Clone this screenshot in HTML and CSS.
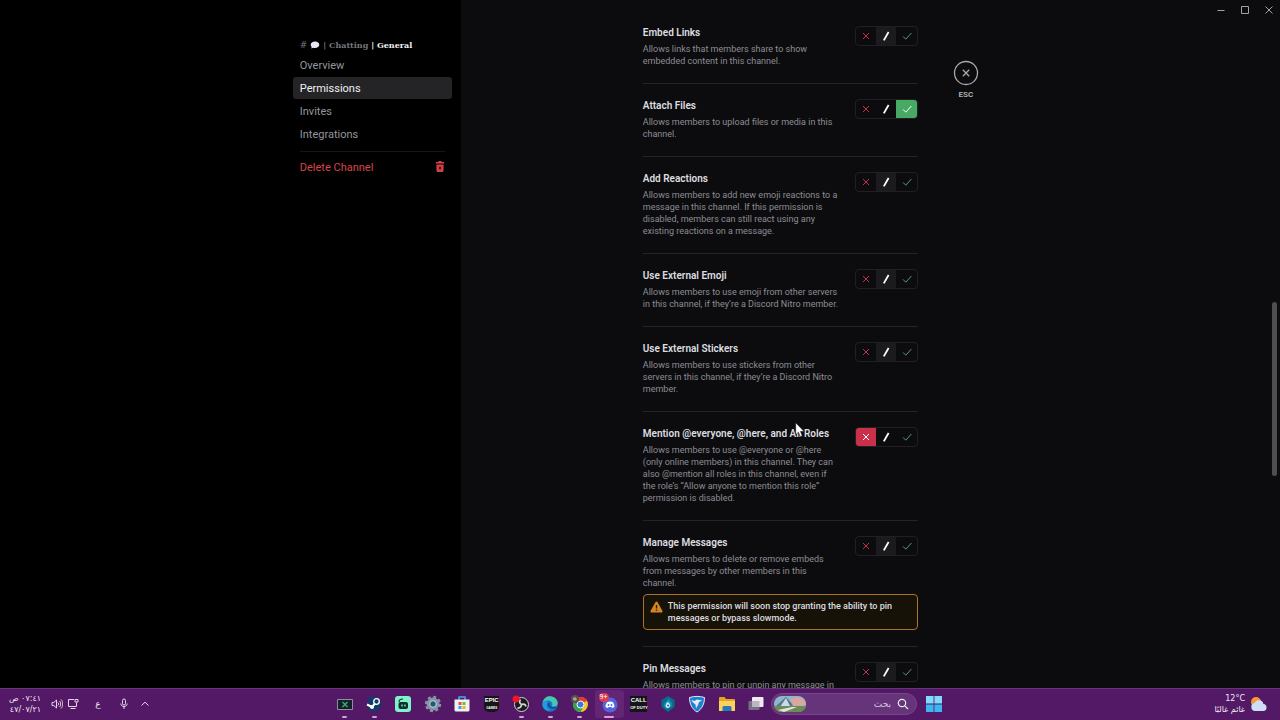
FILE: index.html
```html
<!DOCTYPE html>
<html lang="en">
<head>
    <meta charset="UTF-8">
    <meta name="viewport" content="width=device-width, initial-scale=1.0">
    <title>Channel Permissions</title>
    <link rel="stylesheet" href="styles.css">
</head>
<body>
    <svg class="sprite" aria-hidden="true">
        <symbol id="x" viewBox="0 0 12 12"><path d="M3 3l6 6M9 3l-6 6" /></symbol>
        <symbol id="slash" viewBox="0 0 12 12"><path d="M8.600 2L3.800 10.400" stroke-width="1.800" /></symbol>
        <symbol id="check" viewBox="0 0 12 12"><path d="M2 6.400l2.800 2.800L10.400 3" /></symbol>
    </svg>

    <div class="app">
        <aside class="sidebar">
            <nav class="menu">
                <h2 class="channel">
                    <span class="hash">#</span>
                    <svg class="bubble" viewBox="0 0 10 8"><path d="M5 .5c2.500 0 4.300 1.300 4.300 3.200S7.500 6.900 5 6.900c-.6 0-1.200-.1-1.700-.2L1.300 7.600l.4-1.700C1 5.300.7 4.600.7 3.700.7 1.800 2.500.5 5 .5z" fill="#e8e8f4" /></svg>
                    <span>| Chatting</span>
                    <span class="channel-name">| General</span>
                </h2>
                <a class="item" href="#">Overview</a>
                <a class="item active" href="#">Permissions</a>
                <a class="item" href="#">Invites</a>
                <a class="item" href="#">Integrations</a>
                <hr>
                <button class="item delete">
                    Delete Channel
                    <svg width="10" height="12" viewBox="0 0 10 12"><path d="M3.500 0h3v1H9v1.500H1V1h2.500zM1.500 3.500h7V9.500A1.500 1.500 0 0 1 7 11H3a1.500 1.500 0 0 1-1.500-1.500z" fill="#d9434b" /><path d="M3.800 5.500l2.400 3M6.200 5.500l-2.400 3" stroke="#400" fill="none" /></svg>
                </button>
            </nav>
        </aside>

        <main class="content">
            <div class="permissions">
                <section class="permission">
                    <div class="text">
                        <h3>Embed Links</h3>
                        <p>Allows links that members share to show<br>embedded content in this channel.</p>
                    </div>
                    <div class="toggle">
                        <label class="deny"><input type="radio" name="embed" aria-label="Deny"><svg><use href="#x" /></svg></label>
                        <label class="neutral"><input type="radio" name="embed" aria-label="Neutral" checked><svg><use href="#slash" /></svg></label>
                        <label class="allow"><input type="radio" name="embed" aria-label="Allow"><svg><use href="#check" /></svg></label>
                    </div>
                </section>

                <section class="permission">
                    <div class="text">
                        <h3>Attach Files</h3>
                        <p>Allows members to upload files or media in this<br>channel.</p>
                    </div>
                    <div class="toggle">
                        <label class="deny"><input type="radio" name="attach" aria-label="Deny"><svg><use href="#x" /></svg></label>
                        <label class="neutral"><input type="radio" name="attach" aria-label="Neutral"><svg><use href="#slash" /></svg></label>
                        <label class="allow"><input type="radio" name="attach" aria-label="Allow" checked><svg><use href="#check" /></svg></label>
                    </div>
                </section>

                <section class="permission">
                    <div class="text">
                        <h3>Add Reactions</h3>
                        <p>Allows members to add new emoji reactions to a<br>message in this channel. If this permission is<br>disabled, members can still react using any<br>existing reactions on a message.</p>
                    </div>
                    <div class="toggle">
                        <label class="deny"><input type="radio" name="reactions" aria-label="Deny"><svg><use href="#x" /></svg></label>
                        <label class="neutral"><input type="radio" name="reactions" aria-label="Neutral" checked><svg><use href="#slash" /></svg></label>
                        <label class="allow"><input type="radio" name="reactions" aria-label="Allow"><svg><use href="#check" /></svg></label>
                    </div>
                </section>

                <section class="permission">
                    <div class="text">
                        <h3>Use External Emoji</h3>
                        <p>Allows members to use emoji from other servers<br>in this channel, if they’re a Discord Nitro member.</p>
                    </div>
                    <div class="toggle">
                        <label class="deny"><input type="radio" name="emoji" aria-label="Deny"><svg><use href="#x" /></svg></label>
                        <label class="neutral"><input type="radio" name="emoji" aria-label="Neutral" checked><svg><use href="#slash" /></svg></label>
                        <label class="allow"><input type="radio" name="emoji" aria-label="Allow"><svg><use href="#check" /></svg></label>
                    </div>
                </section>

                <section class="permission">
                    <div class="text">
                        <h3>Use External Stickers</h3>
                        <p>Allows members to use stickers from other<br>servers in this channel, if they’re a Discord Nitro<br>member.</p>
                    </div>
                    <div class="toggle">
                        <label class="deny"><input type="radio" name="stickers" aria-label="Deny"><svg><use href="#x" /></svg></label>
                        <label class="neutral"><input type="radio" name="stickers" aria-label="Neutral" checked><svg><use href="#slash" /></svg></label>
                        <label class="allow"><input type="radio" name="stickers" aria-label="Allow"><svg><use href="#check" /></svg></label>
                    </div>
                </section>

                <section class="permission">
                    <div class="text">
                        <h3>Mention @everyone, @here, and All Roles</h3>
                        <p>Allows members to use @everyone or @here<br>(only online members) in this channel. They can<br>also @mention all roles in this channel, even if<br>the role’s “Allow anyone to mention this role”<br>permission is disabled.</p>
                    </div>
                    <div class="toggle">
                        <label class="deny"><input type="radio" name="mention" aria-label="Deny" checked><svg><use href="#x" /></svg></label>
                        <label class="neutral"><input type="radio" name="mention" aria-label="Neutral"><svg><use href="#slash" /></svg></label>
                        <label class="allow"><input type="radio" name="mention" aria-label="Allow"><svg><use href="#check" /></svg></label>
                    </div>
                </section>

                <section class="permission">
                    <div class="text">
                        <h3>Manage Messages</h3>
                        <p>Allows members to delete or remove embeds<br>from messages by other members in this<br>channel.</p>
                    </div>
                    <div class="toggle">
                        <label class="deny"><input type="radio" name="manage" aria-label="Deny"><svg><use href="#x" /></svg></label>
                        <label class="neutral"><input type="radio" name="manage" aria-label="Neutral" checked><svg><use href="#slash" /></svg></label>
                        <label class="allow"><input type="radio" name="manage" aria-label="Allow"><svg><use href="#check" /></svg></label>
                    </div>
                    <div class="notice">
                        <svg width="13" height="12" viewBox="0 0 13 12"><path d="M6.500.5c.5 0 .9.300 1.100.7l4.800 8.500c.5.900-.1 1.800-1 1.800H1.600c-.9 0-1.500-.9-1-1.800L5.400 1.200c.2-.4.6-.7 1.100-.7z" fill="#d08423" /><path d="M6.500 4v3.500M6.500 8.600v1.200" stroke="#2a1c06" stroke-width="1.300" /></svg>
                        <p>This permission will soon stop granting the ability to pin<br>messages or bypass slowmode.</p>
                    </div>
                </section>

                <section class="permission">
                    <div class="text">
                        <h3>Pin Messages</h3>
                        <p>Allows members to pin or unpin any message in</p>
                    </div>
                    <div class="toggle">
                        <label class="deny"><input type="radio" name="pin" aria-label="Deny"><svg><use href="#x" /></svg></label>
                        <label class="neutral"><input type="radio" name="pin" aria-label="Neutral" checked><svg><use href="#slash" /></svg></label>
                        <label class="allow"><input type="radio" name="pin" aria-label="Allow"><svg><use href="#check" /></svg></label>
                    </div>
                </section>
            </div>

            <button class="close">
                <svg width="26" height="26" viewBox="0 0 26 26"><circle cx="13" cy="13" r="11.500" /><path d="M9.800 9.800l6.400 6.400M16.200 9.800l-6.400 6.400" /></svg>
                ESC
            </button>
        </main>

        <div class="window-buttons">
            <button aria-label="Minimize"><svg viewBox="0 0 10 10"><path d="M1.500 5.500h7" /></svg></button>
            <button aria-label="Maximize"><svg viewBox="0 0 10 10"><path d="M1.500 1.500h7v7h-7z" /></svg></button>
            <button aria-label="Close"><svg viewBox="0 0 10 10"><path d="M1.500 1.500l7 7M8.500 1.500l-7 7" /></svg></button>
        </div>
        <div class="scroll-thumb"></div>
        <svg class="cursor" width="10" height="16" viewBox="0 0 10 16"><path d="M.7.7v12l2.700-2.500 1.900 4.400 2-.9-1.900-4.200h3.800z" fill="#fff" stroke="#111" stroke-width=".6" /></svg>
    </div>

    <footer class="taskbar">
        <div class="tray">
            <div class="clock" lang="ar" dir="rtl">
                <span>٠٧:٤١ ص</span>
                <span>٤٧/٠٧/٢١</span>
            </div>
            <svg class="speaker" width="12" height="12" viewBox="0 0 12 12"><path d="M1 4.500h1.800L5.500 2v8L2.800 7.500H1zM7 4.500c.8.800.8 2.200 0 3M8.500 3c1.600 1.500 1.600 4.500 0 6M10 1.500c2.400 2.500 2.400 6.500 0 9" /></svg>
            <svg class="network" width="12" height="12" viewBox="0 0 12 12"><path d="M7 1.500H1.500v7h8V6M3.500 10.500h5M8 1.500h3V4H8zM9.500 4.500V7" /></svg>
            <span class="lang" lang="ar">ع</span>
            <svg class="mic" width="12" height="12" viewBox="0 0 12 12"><path d="M6 1a1.500 1.500 0 0 1 1.500 1.500v3a1.500 1.500 0 0 1-3 0v-3A1.500 1.500 0 0 1 6 1zM2.800 5.500c0 4 6.400 4 6.400 0M6 8.500V11" /></svg>
            <svg class="chevron" width="10" height="10" viewBox="0 0 10 10"><path d="M1.500 6.500L5 3.200l3.500 3.300" /></svg>
        </div>

        <div class="dock">
            <div class="apps">
                <button class="running" aria-label="Xbox overlay"><svg viewBox="0 0 18 18"><path d="M1.500 4.500h15v10h-15z" fill="#16202b" stroke="#8b9299" /><path d="M6.500 7l5 5M11.500 7l-5 5" stroke="#38b86a" stroke-width="1.300" /></svg></button>
                <button class="running" aria-label="Steam"><svg viewBox="0 0 18 18"><circle cx="9" cy="9" r="7.500" fill="#14396b" /><path d="M2 9.500l5 2.500 3.500-4" stroke="#fff" stroke-width="2" fill="none" /><circle cx="11.500" cy="6.500" r="2.800" fill="#14396b" stroke="#fff" stroke-width="1.300" /><circle cx="7" cy="12" r="2" fill="#fff" /></svg></button>
                <button aria-label="Streamlabs"><svg viewBox="0 0 18 18"><rect x="1" y="1" width="16" height="16" rx="3" fill="#7ff2cb" /><rect x="4.500" y="7" width="9.500" height="7" rx="2" fill="#132f2d" /><path d="M5 7c0-2 1.500-3 4-3" stroke="#132f2d" stroke-width="1.200" fill="none" /><path d="M8 9.500v2M11 9.500v2" stroke="#7ff2cb" stroke-width="1.300" /></svg></button>
                <button aria-label="Settings"><svg viewBox="0 0 18 18"><circle cx="9" cy="9" r="6.500" fill="#8795a3" /><circle cx="9" cy="9" r="7" fill="none" stroke="#8795a3" stroke-width="2.400" stroke-dasharray="3 2.500" /><circle cx="9" cy="9" r="3.300" fill="#235784" stroke="#cfd7df" /></svg></button>
                <button aria-label="Store"><svg viewBox="0 0 18 18"><path d="M6 5V2h6v3" stroke="#4da9e8" stroke-width="1.500" fill="none" /><path d="M1.500 4.500h15V15a1.500 1.500 0 0 1-1.500 1.500H3A1.500 1.500 0 0 1 1.500 15z" fill="#eef1f5" /><path d="M5.500 7h3v3h-3z" fill="#e6532c" /><path d="M9.500 7h3v3h-3z" fill="#7eb927" /><path d="M5.500 11h3v3h-3z" fill="#34a2e3" /><path d="M9.500 11h3v3h-3z" fill="#f2b51d" /></svg></button>
                <button class="epic" aria-label="Epic Games"><span>EPIC</span><small>GAMES</small></button>
                <button class="running" aria-label="OBS"><svg viewBox="0 0 18 18"><circle cx="9.500" cy="9.500" r="7" fill="#1b1a1e" stroke="#d5d3d8" /><path d="M9.500 9.500c-2-1-2.500-3-1-5M9.500 9.500c2-1 4 0 4.500 2M9.500 9.500c0 2-1.500 4-4 3.500" stroke="#d5d3d8" stroke-width="1.800" fill="none" /><circle cx="4" cy="4" r="3.500" fill="#f01722" /></svg></button>
                <button class="running" aria-label="Edge"><svg viewBox="0 0 18 18"><circle cx="9" cy="9" r="7.800" fill="#1875c7" /><path d="M1.500 8C2.500 3 6 1.200 9 1.200c5 0 8 4 7.700 7.300-.2 2-1.700 3-4 3-1.500 0-2.200-.5-1.500-1.500C12 8 10 5.500 7 5.500S2 7 1.500 8z" fill="#45c7b0" /><path d="M7 7c-2.500 2-1.500 7 3 8.500-6 1-9-3-8.500-7C3 6 6 5.500 7 7z" fill="#2499e0" /><path d="M8 8c-1.500 3 2 6 7 4.500" stroke="#103f88" stroke-width="1.300" fill="none" /></svg></button>
                <button class="running" aria-label="Chrome"><svg viewBox="0 0 18 18"><circle cx="9.500" cy="9.500" r="7.500" fill="#f5c52c" /><path d="M9.500 9.500L3 5.700A7.500 7.500 0 0 1 16 5.700z" fill="#df3c30" /><path d="M9.500 9.500L3 5.700A7.500 7.500 0 0 0 9.500 17l3-5.500z" fill="#32a150" /><circle cx="9.500" cy="9.500" r="3.500" fill="#3979df" stroke="#fff" /><circle cx="4" cy="4" r="4" fill="#59504a" /><path d="M2 3l2-1 2 2-1 2-3-1z" fill="#aaa198" /></svg></button>
                <button class="running current" aria-label="Discord"><svg viewBox="0 0 18 18"><circle cx="10" cy="10" r="7.500" fill="#5362df" /><path d="M7 7.200c2-.8 4-.8 6 0 1 1.500 1.500 3 1.400 4.800-1 .7-1.700 1-2.400 1l-.5-1h-3l-.5 1c-.7 0-1.400-.3-2.400-1C5.500 10.200 6 8.700 7 7.200z" fill="#fff" /><circle cx="8.500" cy="10" r=".9" fill="#5362df" /><circle cx="11.500" cy="10" r=".9" fill="#5362df" /></svg><span class="badge">9+</span></button>
                <button class="cod" aria-label="Call of Duty"><span>CALL</span><span>OF DUTY</span></button>
                <button aria-label="Flame launcher"><svg viewBox="0 0 18 18"><path d="M9 1l6.500 4v7L9 17l-6.500-5V5z" fill="#096b91" /><path d="M10 3c0 3 4 4 3 7.500-1.500 4-7 4-8 .5-.7-3 3-4 5-8z" fill="#1193af" /><path d="M8.500 7c3 1.500 3.500 5 .5 6-3 0-3-3-.5-6z" fill="#dff3f8" /><circle cx="9" cy="10.500" r="1" fill="#096b91" /></svg></button>
                <button aria-label="Rocket League"><svg viewBox="0 0 18 18"><path d="M1.500 2.500c5-1.500 10-1.500 15 0C16.500 9 14 14 9 17 4 14 1.500 9 1.500 2.500z" fill="#1f7fd4" stroke="#dce9f5" /><path d="M3.500 5l3 1 2.500-1.500 5 1-3 1.500-1 3-2 3.500-.5-4L4.500 7z" fill="#e3edf8" /></svg></button>
                <button aria-label="File Explorer"><svg viewBox="0 0 18 18"><path d="M1 3a1 1 0 0 1 1-1h4.500L8 4h8a1 1 0 0 1 1 1v11H1z" fill="#e4a51f" /><path d="M1 6h16v10H1z" fill="#fbd15b" /><path d="M4.500 16v-3.500A1.500 1.500 0 0 1 6 11h6a1.500 1.500 0 0 1 1.500 1.500V16z" fill="#2878bd" /></svg></button>
                <button aria-label="Task View"><svg viewBox="0 0 18 18"><rect x="1.500" y="6" width="11" height="9" rx="1" fill="#777080" /><rect x="5" y="2" width="11.500" height="10" rx="1" fill="#eeeaf0" /><path d="M5 6h7.500v6H5z" fill="#bdb5c2" /></svg></button>
            </div>
            <label class="search">
                <svg class="scene" width="34" height="18" viewBox="0 0 34 18"><path d="M9 1h16a8 8 0 0 1 0 16H9A8 8 0 0 1 9 1z" fill="#8eb7cc" /><path d="M2 12L13 2l8 9z" fill="#54788f" /><path d="M7 12l6-9 4 8z" fill="#c9dce3" /><path d="M17 4l8-2c5 1 8 4 8 8l-13 1z" fill="#d9a6a0" /><path d="M1 11h32c-1 4-4 6-8 6H9c-4 0-7-2-8-6z" fill="#6d8b52" /><path d="M5 15l14-3h5L11 17z" fill="#dce6e8" /></svg>
                <input type="text" placeholder="بحث" dir="rtl" aria-label="بحث">
                <svg width="12" height="12" viewBox="0 0 12 12"><circle cx="5" cy="5" r="3.700" fill="none" stroke="#eee" stroke-width="1.200" /><path d="M7.800 7.800L11 11" stroke="#eee" stroke-width="1.200" /></svg>
            </label>
            <button class="start" aria-label="Start"><svg viewBox="0 0 18 18"><path d="M1 1h7.600v7.600H1zM9.400 1H17v7.600H9.400z" fill="#7fdcfb" /><path d="M1 9.400h7.600V17H1zM9.400 9.400H17V17H9.400z" fill="#3cb5f0" /></svg></button>
        </div>

        <div class="weather">
            <div class="forecast" lang="ar" dir="rtl">
                <span dir="ltr">12°C</span>
                <span>غائم غالبًا</span>
            </div>
            <svg width="18" height="16" viewBox="0 0 18 16"><circle cx="6" cy="6" r="5" fill="#f49b38" /><path d="M5 15a4 4 0 0 1-.5-7.900A4.800 4.800 0 0 1 13.500 8 3.600 3.600 0 0 1 14 15z" fill="#cfdef7" /></svg>
        </div>
    </footer>
</body>
</html>
```

FILE: styles.css
```css
* {
    box-sizing: border-box;
}
body {
    margin: 0;
    height: 100vh;
    display: flex;
    flex-direction: column;
    overflow: hidden;
    background-color: #0c0c0e;
    color: #dddde0;
    font-family: Roboto, "Noto Sans", sans-serif;
    font-size: 9px;
}
h2, h3, p {
    margin: 0;
}
button {
    padding: 0;
    border: none;
    background: none;
    color: inherit;
    font-family: inherit;
    cursor: pointer;
}
svg {
    display: block;
    flex-shrink: 0;
}
.sprite {
    display: none;
}
.app {
    position: relative;
    flex: 1;
    min-height: 0;
    display: flex;
    overflow: hidden;
}

/* Sidebar */
.sidebar {
    width: 36%;
    padding: 36px 9px 0 0;
    display: flex;
    justify-content: flex-end;
    background-color: #000;
}
.menu {
    width: 159px;
    display: flex;
    flex-direction: column;
    gap: 1px;
}
.channel {
    display: flex;
    align-items: center;
    gap: 3px;
    height: 17px;
    padding-left: 7px;
    color: #77777c;
    font: bold 8px "DejaVu Serif", serif;
    white-space: nowrap;
}
.hash {
    font-family: "DejaVu Sans", sans-serif;
    font-size: 9px;
    font-weight: normal;
}
.bubble {
    width: 10px;
    height: 8px;
}
.channel-name {
    color: #f2f2f4;
}
.item {
    display: flex;
    align-items: center;
    justify-content: space-between;
    height: 22px;
    padding: 0 7px;
    border-radius: 3px;
    color: #94959c;
    font-size: 11px;
    text-decoration: none;
}
.item.active {
    background-color: #242427;
    color: #f0f0f2;
}
.menu hr {
    width: 145px;
    margin: 5px 7px 3px;
    border: none;
    border-top: 1px solid #161618;
}
.item.delete {
    color: #d9434b;
}

/* Permission list */
.content {
    flex: 1;
    display: flex;
    align-items: flex-start;
    gap: 35px;
    padding: 25px 0 0 182px;
}
.permissions {
    width: 275px;
}
.permission {
    display: flex;
    flex-wrap: wrap;
    justify-content: space-between;
    padding-bottom: 16px;
    margin-bottom: 14px;
    border-bottom: 1px solid #242427;
}
.text {
    width: 200px;
    white-space: nowrap;
}
.text h3 {
    margin-bottom: 2px;
    font-size: 10px;
    font-weight: 600;
    line-height: 16px;
}
.text p {
    color: #8c8d95;
    line-height: 12px;
}
.toggle {
    display: flex;
    width: 63px;
    height: 20px;
    margin-top: 1px;
    border: 1px solid #202024;
    border-radius: 4px;
    overflow: hidden;
}
.toggle label {
    position: relative;
    flex: 1;
    display: flex;
    align-items: center;
    justify-content: center;
}
.toggle input {
    position: absolute;
    inset: 0;
    margin: 0;
    appearance: none;
}
.toggle svg {
    position: relative;
    width: 12px;
    height: 12px;
    fill: none;
    stroke: currentColor;
}
.deny {
    color: #c5304b;
}
.neutral {
    color: #fff;
}
.allow {
    color: #579b6c;
}
.deny input:checked {
    background-color: #cb304a;
}
.neutral input:checked {
    background-color: #1b1b1e;
}
.allow input:checked {
    background-color: #48a965;
}
.deny input:checked + svg,
.allow input:checked + svg {
    color: #fff;
}
.notice {
    display: flex;
    gap: 5px;
    width: 100%;
    margin-top: 5px;
    padding: 5px 6px;
    border: 1px solid #ad7429;
    border-radius: 4px;
    background-color: #171207;
    line-height: 12px;
    font-weight: 500;
    white-space: nowrap;
}
.notice svg {
    margin-top: 1px;
}

.close {
    display: flex;
    flex-direction: column;
    align-items: center;
    gap: 4px;
    margin-top: 35px;
    color: #b4b4b8;
    font-size: 8px;
    font-weight: 600;
}
.close svg {
    fill: none;
    stroke: #a9a9ad;
    stroke-width: 1.3;
}
.window-buttons {
    position: absolute;
    top: 5px;
    right: 6px;
    display: flex;
    gap: 14px;
}
.window-buttons svg {
    width: 10px;
    height: 10px;
    fill: none;
    stroke: #a2a2a6;
}
.scroll-thumb {
    position: absolute;
    top: 302px;
    right: 3px;
    width: 5px;
    height: 174px;
    border-radius: 3px;
    background-color: #4e4e52;
}
.cursor {
    position: absolute;
    top: 422px;
    left: 795px;
}

/* Taskbar */
.taskbar {
    display: grid;
    grid-template-columns: 1fr auto 1fr;
    height: 32px;
    padding-bottom: 1px;
    border-top: 1px solid #67367a;
    background-color: #531866;
    color: #f0e8f3;
}
.tray {
    display: flex;
    align-items: center;
    padding-left: 12px;
}
.tray svg {
    fill: none;
    stroke: #e4d8e8;
}
.clock, .forecast {
    display: flex;
    flex-direction: column;
    align-items: flex-start;
    font-family: "DejaVu Sans", sans-serif;
    font-size: 8px;
    line-height: 11px;
    white-space: nowrap;
}
.clock {
    width: 29px;
}
.speaker {
    margin-left: 10px;
}
.network {
    margin-left: 4px;
}
.lang {
    width: 10px;
    margin-left: 14px;
    font-family: "DejaVu Sans", sans-serif;
    text-align: center;
}
.mic {
    margin-left: 15px;
}
.chevron {
    margin-left: 10px;
}
.dock {
    display: flex;
    align-items: center;
}
.apps {
    display: grid;
    grid-template-columns: repeat(15, 1fr);
    width: 441px;
}
.apps button, .start {
    position: relative;
    display: flex;
    flex-direction: column;
    align-items: center;
    justify-content: center;
    height: 28px;
}
.apps button > svg, .start svg {
    width: 18px;
    height: 18px;
}
.start {
    width: 33px;
}
.running::after {
    content: "";
    position: absolute;
    bottom: 0;
    width: 5px;
    height: 2px;
    border-radius: 1px;
    background-color: #c9a5d2;
}
.current {
    border-radius: 3px;
    background-color: #622674;
}
.current::after {
    width: 10px;
    background-color: #e29ae0;
}
.badge {
    position: absolute;
    top: 3px;
    left: 4px;
    padding: 0 1px;
    border-radius: 5px;
    background-color: #dc3c50;
    color: #fff;
    font-size: 7px;
    line-height: 9px;
}
.epic span, .epic small, .cod span {
    width: 15px;
    background-color: #151417;
    color: #fff;
    font: bold 6px/8px "Liberation Sans", sans-serif;
    text-align: center;
    white-space: nowrap;
}
.epic small {
    font-size: 3px;
    border-radius: 0 0 5px 5px;
}
.cod span {
    width: 17px;
}
.cod span + span {
    font-size: 4px;
}
.search {
    display: flex;
    align-items: center;
    gap: 6px;
    width: 146px;
    height: 22px;
    padding: 0 7px 0 1px;
    border: 1px solid #754682;
    border-radius: 11px;
    background-color: #66347a;
}
.search input {
    flex: 1;
    min-width: 0;
    padding: 0;
    border: none;
    outline: none;
    background: none;
    color: #eee;
    font-family: "DejaVu Sans", sans-serif;
    font-size: 9px;
}
.search input::placeholder {
    color: #d6c5dc;
}
.weather {
    display: flex;
    align-items: center;
    justify-content: flex-end;
    gap: 5px;
    padding-right: 12px;
}
```
